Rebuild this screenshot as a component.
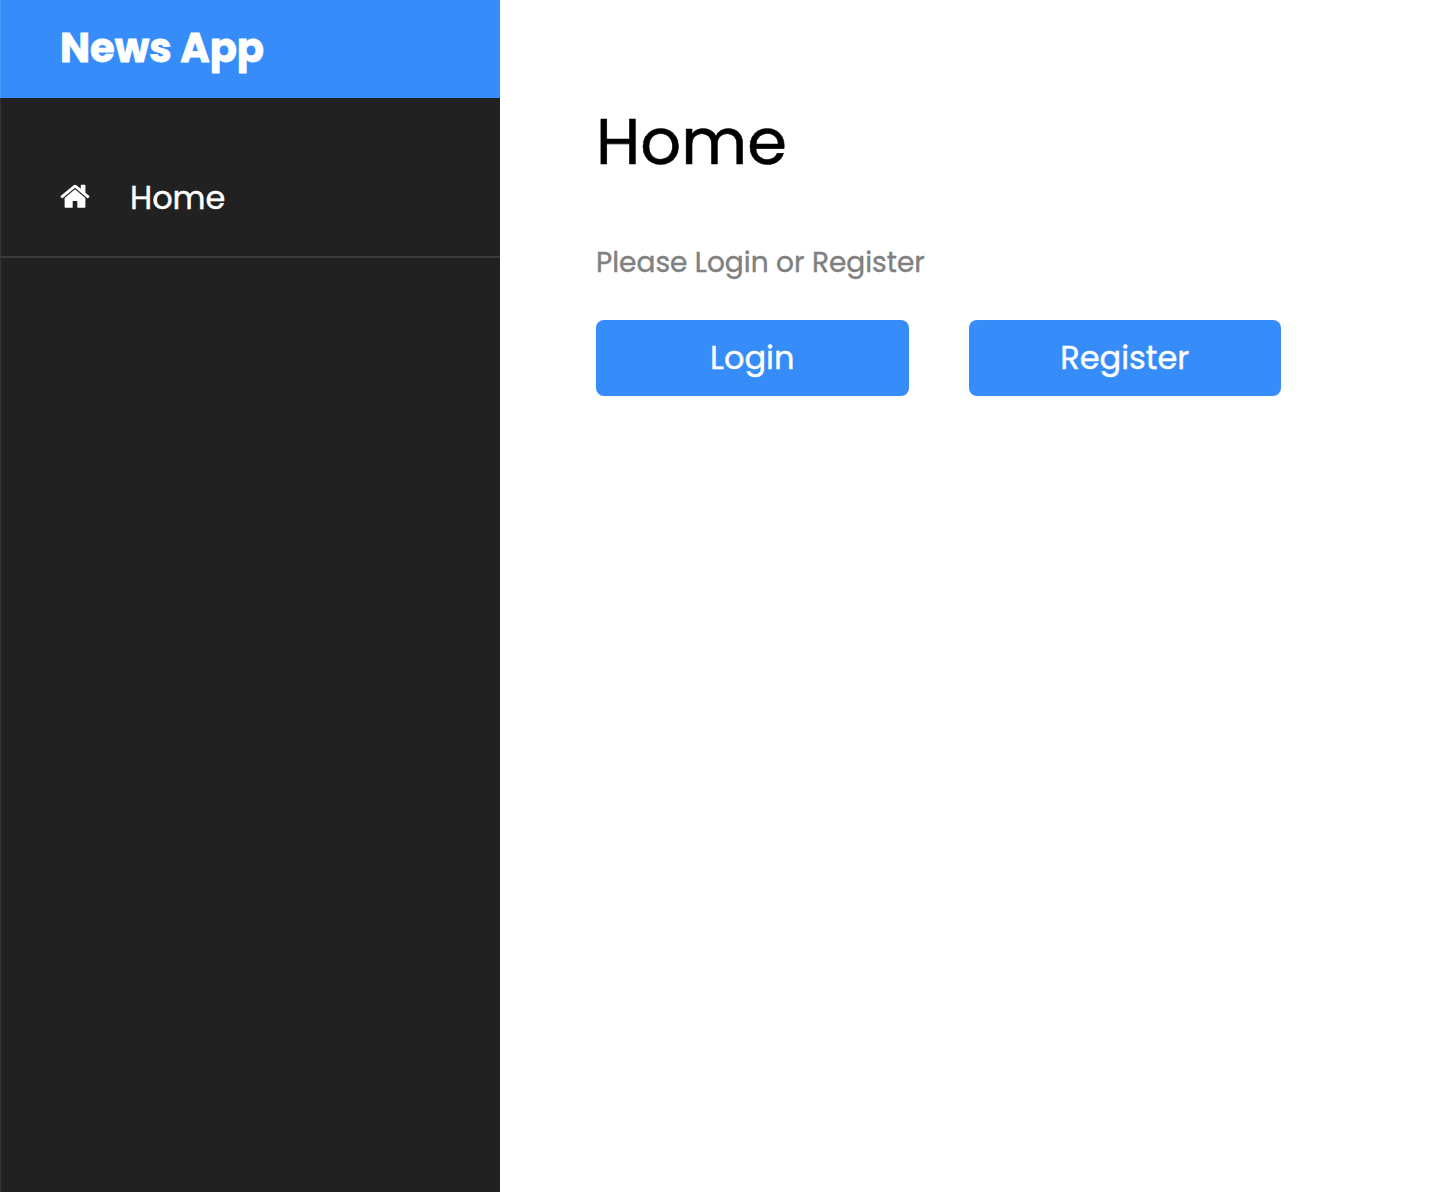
<div class="app">
  <aside>
    <header><span class="brand">News App</span></header>
    <nav>
      <a class="item" href="#home">
        <svg class="icon" viewBox="0 0 1664 1312" aria-hidden="true">
          <path fill="currentColor" d="M1408 768v480q0 26-19 45t-45 19H960V928H704v384H320q-26 0-45-19t-19-45V768q0-1 .5-3t.5-3l575-474 575 474q1 2 1 6zm223-69l-62 74q-8 9-21 11h-3q-13 0-21-7L832 200 140 777q-12 8-24 7-13-2-21-11l-62-74q-8-10-7-23.500t11-21.500L756 55q32-26 76-26t76 26l244 204V64q0-14 9-23t23-9h192q14 0 23 9t9 23v408l219 182q10 8 11 21.500t-7 23.500z" />
        </svg>
        <span class="label">Home</span>
      </a>
    </nav>
  </aside>
  <main>
    <h1>Home</h1>
    <p>Please Login or Register</p>
    <div class="actions">
      <button>Login</button>
      <button>Register</button>
    </div>
  </main>
</div>

<style>
  :global(body) { margin: 0; background: #fff; }
  .app { display: flex; height: 1192px; overflow: hidden; font-family: Poppins, Inter, "Open Sans", sans-serif; -webkit-text-stroke: 0.4px currentColor; }
  aside { box-sizing: border-box; width: 500px; flex: none; background: #212121; box-shadow: inset 1px 0 #333; }
  header { box-sizing: border-box; height: 98px; padding: 18px 60px 0; background: #368cf9; box-shadow: inset 1px 0 #4a97fa; color: #fff; font-size: 40px; line-height: 60px; font-weight: 700; -webkit-text-stroke: 0.8px currentColor; }
  nav { padding-top: 38px; }
  .item { box-sizing: border-box; display: flex; align-items: center; height: 122px; padding: 0 60px; border-bottom: 2px solid #3a3a3a; color: #fff; font-size: 32px; text-decoration: none; }
  .icon { width: 30px; height: 24px; margin-right: 40px; }
  .label { padding-top: 3px; }
  main { padding: 96px 0 0 96px; }
  h1 { margin: 0; height: 90px; line-height: 92px; font-size: 64px; font-weight: 400; color: #000; -webkit-text-stroke: 0.6px currentColor; }
  p { margin: 55px 0 0; height: 44px; line-height: 44px; font-size: 28px; color: #808080; }
  .actions { display: flex; gap: 60px; margin-top: 35px; }
  button { width: 312.500px; height: 76px; padding: 0; border: 0; border-radius: 8px; background: #368cf9; color: #fff; font-family: inherit; font-size: 32px; }
</style>
